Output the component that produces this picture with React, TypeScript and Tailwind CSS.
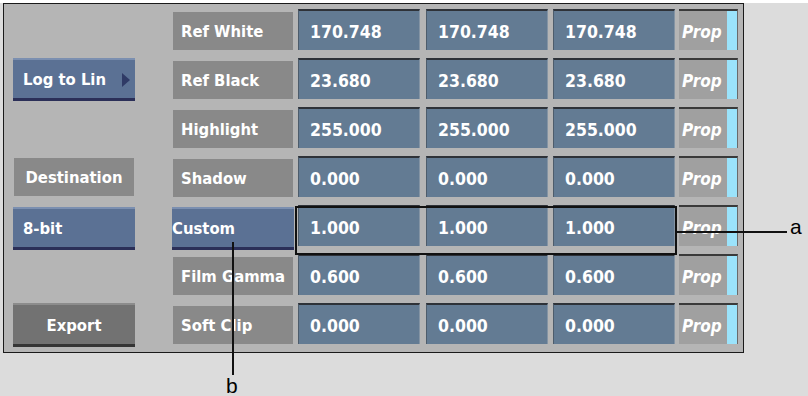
const rows = [
  { label: "Ref White", values: ["170.748", "170.748", "170.748"] },
  { label: "Ref Black", values: ["23.680", "23.680", "23.680"] },
  { label: "Highlight", values: ["255.000", "255.000", "255.000"] },
  { label: "Shadow", values: ["0.000", "0.000", "0.000"] },
  { label: "Custom", values: ["1.000", "1.000", "1.000"], button: true },
  { label: "Film Gamma", values: ["0.600", "0.600", "0.600"] },
  { label: "Soft Clip", values: ["0.000", "0.000", "0.000"] },
]

const uiFont = "font-['DejaVu_Sans_Condensed','DejaVu_Sans',sans-serif]"

const GrayLabel = ({ text, center }: { text: string; center?: boolean }) => (
  <div
    className={`mt-[3px] flex h-[38px] items-center bg-[#898989] pt-[2px] text-[16.5px] font-bold text-white ${
      center ? "justify-center" : "pl-[8px]"
    }`}
  >
    {text}
  </div>
)

const BlueButton = ({
  text,
  arrow,
  className = "",
}: {
  text: string
  arrow?: boolean
  className?: string
}) => (
  <div
    className={`flex h-[43px] items-center justify-between border-t-[2px] border-b-[3px] border-t-[#7b8fb0] border-b-[#2b2f58] bg-[#5b7194] pt-[3px] text-[16.5px] font-bold text-white ${className}`}
  >
    <span>{text}</span>
    {arrow && (
      <svg width="9" height="14" viewBox="0 0 9 14" className="mr-[4px] mb-[2px]">
        <polygon points="0,0 8,7 0,14" fill="#2f3a66" />
      </svg>
    )}
  </div>
)

const ValueField = ({ value }: { value: string }) => (
  <div className="flex h-[41px] w-[122px] items-center border-t-[2px] border-l border-t-[#2e3238] border-l-[#4d5c6b] border-r border-r-[#8494a4] bg-[#637b93] pl-[11px] pt-[4px] text-[17.5px] font-bold text-white">
    {value}
  </div>
)

const PropField = () => (
  <div className="flex h-[41px] w-[59px] border-t-[2px] border-t-[#3a3a3a] border-r border-r-[#6a6a6a] bg-[#a0a0a0]">
    <span className="flex flex-1 items-center pl-[3px] pt-[4px] text-[17px] font-bold italic text-white">
      Prop
    </span>
    <span className="w-[10px] bg-[#9be3fb]" />
  </div>
)

export default function App() {
  return (
    <div className={`relative h-[396px] w-[808px] bg-[#dcdcdc] ${uiFont}`}>
      {/* Panel */}
      <div className="ml-[3px] mt-[3px] w-[741px] h-[350px] border border-[#1a1a1a] bg-[#b5b5b5] pl-[9px] pt-[5px]">
        <div className="grid grid-cols-[155px_120px_123px_122px_121px_59px] grid-rows-[repeat(7,41px)] gap-x-[5px] gap-y-[8px]">
          {/* Left column */}
          <div className="col-start-1 row-start-2 w-[122px]">
            <BlueButton text="Log to Lin" arrow className="pl-[10px]" />
          </div>
          <div className="col-start-1 row-start-4 w-[120px] ml-[1px] mt-[-1px]">
            <GrayLabel text="Destination" center />
          </div>
          <div className="col-start-1 row-start-5 w-[122px] pt-[2px]">
            <BlueButton text="8-bit" className="pl-[10px]" />
          </div>
          <div className="col-start-1 row-start-7 w-[122px]">
            <div className="flex h-[44px] items-center justify-center border-t-[2px] border-b-[3px] border-t-[#8c8c8c] border-b-[#353535] bg-[#727272] pt-[3px] text-[16.5px] font-bold text-white">
              Export
            </div>
          </div>

          {/* Parameter rows */}
          {rows.map((row, i) => (
            <div key={row.label} className="contents">
              <div className="col-start-2" style={{ gridRowStart: i + 1 }}>
                {row.button ? (
                  <div className="pt-[2px] ml-[-1px] w-[122px]">
                    <BlueButton text={row.label} />
                  </div>
                ) : (
                  <GrayLabel text={row.label} />
                )}
              </div>
              {row.values.map((v, j) => (
                <div key={j} style={{ gridRowStart: i + 1, gridColumnStart: j + 3 }}>
                  <ValueField value={v} />
                </div>
              ))}
              <div className="col-start-6" style={{ gridRowStart: i + 1 }}>
                <PropField />
              </div>
            </div>
          ))}
        </div>
      </div>

      {/* Selection outline around the Custom values */}
      <div className="absolute left-[295px] top-[203px] h-[49px] w-[382px] border-[2px] border-[#111]" />

      {/* Callout a */}
      <div className="absolute left-[677px] top-[228px] h-[2px] w-[110px] bg-[#111]" />
      <span className="absolute left-[790px] top-[213px] font-['Liberation_Sans',Arial,sans-serif] text-[21px] leading-none text-black">
        a
      </span>

      {/* Callout b */}
      <div className="absolute left-[232px] top-[239px] h-[133px] w-[2px] bg-[#111]" />
      <span className="absolute left-[226px] top-[372px] font-['Liberation_Sans',Arial,sans-serif] text-[21px] leading-none text-black">
        b
      </span>
    </div>
  )
}
